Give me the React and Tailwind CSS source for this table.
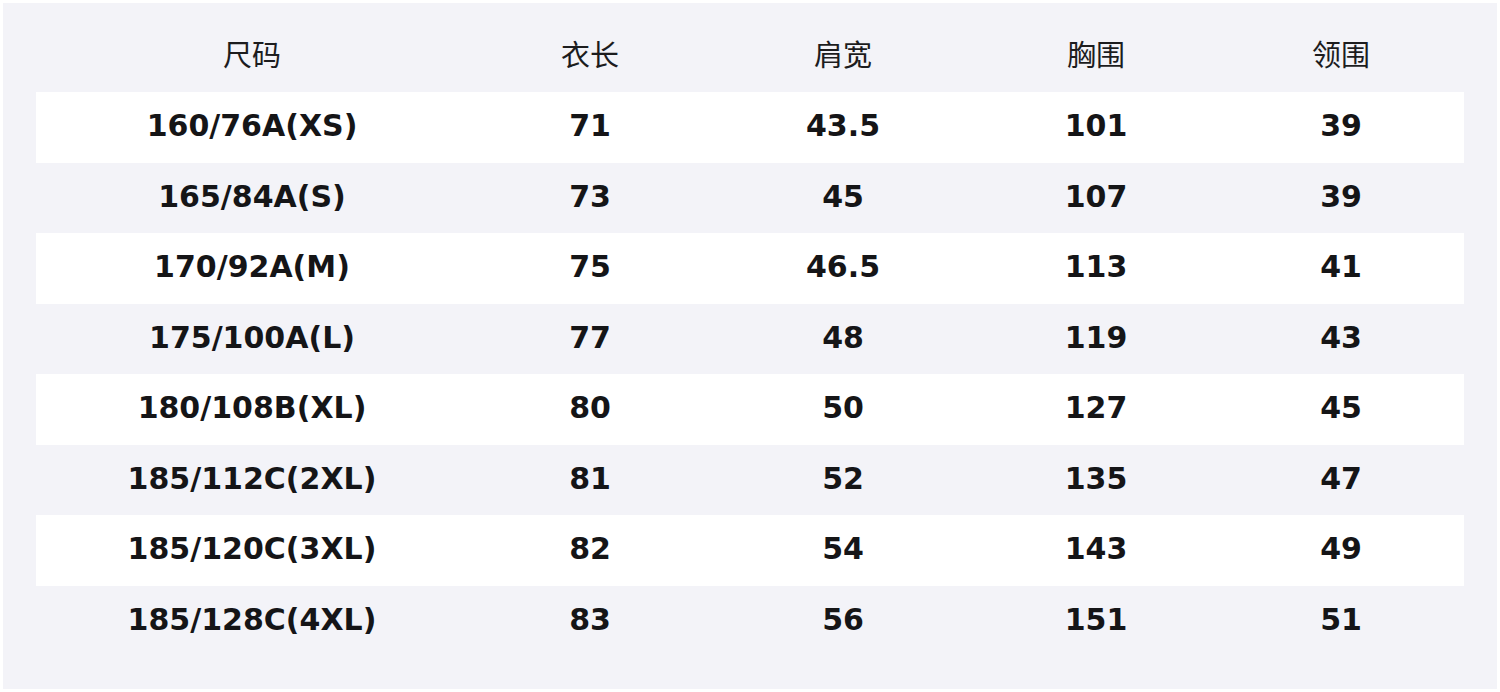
const headers = ['尺码', '衣长', '肩宽', '胸围', '领围']

const rows = [
  ['160/76A(XS)', '71', '43.5', '101', '39'],
  ['165/84A(S)', '73', '45', '107', '39'],
  ['170/92A(M)', '75', '46.5', '113', '41'],
  ['175/100A(L)', '77', '48', '119', '43'],
  ['180/108B(XL)', '80', '50', '127', '45'],
  ['185/112C(2XL)', '81', '52', '135', '47'],
  ['185/120C(3XL)', '82', '54', '143', '49'],
  ['185/128C(4XL)', '83', '56', '151', '51'],
]

const grid = 'grid grid-cols-[432px_244px_262px_244px_246px]'

export default function App() {
  return (
    <div className="w-[1500px] h-[692px] bg-white p-[3px]">
      <div className="h-[686px] bg-[#f3f3f8] px-[33px]">
        {/* 表头 */}
        <div className={`${grid} h-[89px] pt-[11px] items-center`}>
          {headers.map((h) => (
            <div
              key={h}
              className="text-center text-[29px] leading-none text-[#1c1c1e] font-['Noto_Sans_CJK_SC','Noto_Sans',sans-serif]"
            >
              {h}
            </div>
          ))}
        </div>

        {/* 数据行 */}
        {rows.map((row, i) => (
          <div
            key={row[0]}
            className={`${grid} h-[70.5px] items-center pb-[2px] ${i % 2 === 0 ? 'bg-white' : ''}`}
          >
            {row.map((cell, j) => (
              <div
                key={j}
                className="text-center text-[30px] leading-none font-bold text-[#151517] font-['DejaVu_Sans',sans-serif]"
              >
                {cell}
              </div>
            ))}
          </div>
        ))}
      </div>
    </div>
  )
}
